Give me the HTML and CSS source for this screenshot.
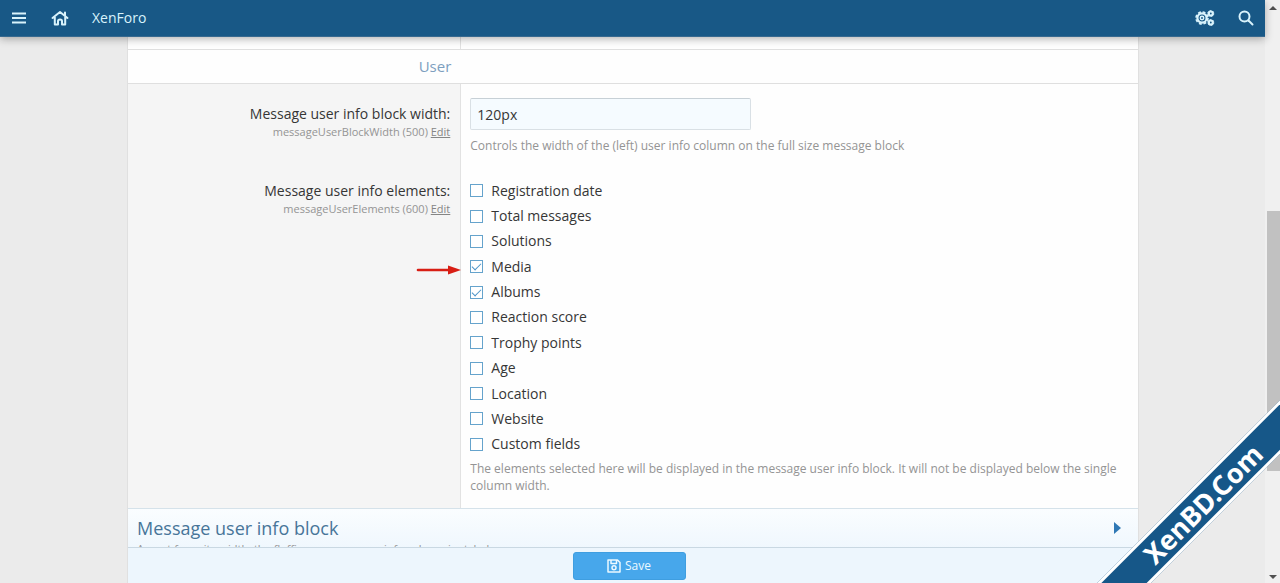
FILE: index.html
```html
<!DOCTYPE html>
<html lang="en">
<head>
<meta charset="utf-8">
<title>XenForo</title>
<link rel="stylesheet" href="styles.css">
</head>
<body>
<div class="app">
  <header class="topbar">
    <button class="icon-btn" type="button" aria-label="Menu"><svg width="14" height="14" viewBox="0 0 14 14"><path d="M0 2.500h14M0 7h14M0 11.500h14" stroke="currentColor" stroke-width="2"/></svg></button>
    <a class="icon-btn home" href="#" aria-label="Home"><svg width="18" height="16" viewBox="0 0 18 16" fill="none" stroke="currentColor" stroke-width="2" stroke-linejoin="round" stroke-linecap="round"><path d="M1.500 8 9 2l7.500 6M3.800 7V14.500H7V11Q7 9.500 9 9.500t2 1.500V14.500h3.200V7M14 2.500v3"/></svg></a>
    <a class="brand" href="#">XenForo</a>
    <button class="icon-btn gears" type="button" aria-label="Settings"><svg width="20" height="18" viewBox="0 0 20 18" fill="none" stroke="currentColor"><circle cx="7" cy="9" r="4.600" stroke-width="2.200"/><circle cx="7" cy="9" r="6" stroke-width="1.600" stroke-dasharray="2.900 1.800"/><circle cx="7" cy="9" r="1.700" stroke-width="1.500"/><circle cx="15.800" cy="4.500" r="2" stroke-width="2.200"/><circle cx="15.800" cy="4.500" r="3" stroke-width="1" stroke-dasharray="1.800 1.340"/><circle cx="15.800" cy="13.500" r="2" stroke-width="2.200"/><circle cx="15.800" cy="13.500" r="3" stroke-width="1" stroke-dasharray="1.800 1.340"/></svg></button>
    <button class="icon-btn" type="button" aria-label="Search"><svg width="16" height="16" viewBox="0 0 16 16" fill="none" stroke="currentColor" stroke-width="2" stroke-linecap="round"><circle cx="6.500" cy="6.500" r="5"/><path d="m10.500 10.500 4 4"/></svg></button>
  </header>

  <main class="content">
    <form class="block">
      <div class="row sliver"><div class="row-label"></div><div class="row-body"></div></div>
      <h2 class="section"><span>User</span></h2>

      <div class="row row-first">
        <div class="row-label">
          <label class="label" for="width">Message user info block width:</label>
          <div class="meta">messageUserBlockWidth (500) <a href="#">Edit</a></div>
        </div>
        <div class="row-body">
          <input class="text-input" id="width" type="text" value="120px">
          <p class="hint">Controls the width of the (left) user info column on the full size message block</p>
        </div>
      </div>

      <div class="row">
        <div class="row-label elements">
          <div class="label" id="elements">Message user info elements:</div>
          <div class="meta">messageUserElements (600) <a href="#">Edit</a></div>
          <svg class="arrow" width="46" height="12" viewBox="0 0 46 12"><path d="M2 6h34" stroke="#d81e14" stroke-width="2.600" stroke-linecap="round"/><path d="M32 1.500 45 6 32 10.500Z" fill="#d81e14"/></svg>
        </div>
        <div class="row-body">
          <div class="choices" role="group" aria-labelledby="elements">
            <label><input type="checkbox">Registration date</label>
            <label><input type="checkbox">Total messages</label>
            <label><input type="checkbox">Solutions</label>
            <label><input type="checkbox" checked>Media</label>
            <label><input type="checkbox" checked>Albums</label>
            <label><input type="checkbox">Reaction score</label>
            <label><input type="checkbox">Trophy points</label>
            <label><input type="checkbox">Age</label>
            <label><input type="checkbox">Location</label>
            <label><input type="checkbox">Website</label>
            <label><input type="checkbox">Custom fields</label>
          </div>
          <p class="hint">The elements selected here will be displayed in the message user info block. It will not be displayed below the single column width.</p>
        </div>
      </div>

      <button class="toggle" type="button">
        <span class="toggle-title">Message user info block</span>
        <svg class="caret" width="7" height="12" viewBox="0 0 7 12"><path d="M0 0 7 6 0 12Z" fill="#2f78b5"/></svg>
        <span class="toggle-desc">Aspect for suite width, the fluffier message user info column is styled</span>
      </button>

      <div class="submit">
        <button class="save" type="submit"><svg width="14" height="14" viewBox="0 0 14 14" fill="none" stroke="currentColor" stroke-width="1.500" stroke-linejoin="round"><path d="M1 1h9.500L13 3.500V13H1ZM4 1v3.500h5.500V1"/><circle cx="7" cy="8.800" r="2"/></svg>Save</button>
      </div>
    </form>
  </main>

  <div class="scrollbar" aria-hidden="true">
    <svg width="8" height="4" viewBox="0 0 8 4"><path d="M4 0 8 4H0Z" fill="#505050"/></svg>
    <div class="track"><div class="thumb"></div></div>
    <svg width="8" height="4" viewBox="0 0 8 4"><path d="M0 0H8L4 4Z" fill="#505050"/></svg>
  </div>
  <div class="ribbon">XenBD.Com</div>
</div>
</body>
</html>
```
FILE: styles.css
```css
* { box-sizing: border-box; }

body {
  margin: 0;
  background: #ebebeb;
  color: #363636;
  font: 14px/20px "Open Sans", "Noto Sans", sans-serif;
}

button, input { font: inherit; }
p, h2 { margin: 0; }

.app {
  position: relative;
  display: grid;
  grid-template: auto minmax(0, 1fr) / minmax(0, 1fr) 15px;
  height: 100vh;
  overflow: hidden;
}

.topbar {
  z-index: 2;
  display: flex;
  align-items: center;
  height: 37px;
  padding: 0 11px;
  background: #185886;
  color: #d9f3fc;
  border-bottom: 1px solid #37698f;
  box-shadow: 0 2px 8px rgba(0, 0, 0, .3);
}

.icon-btn {
  display: flex;
  align-items: center;
  justify-content: center;
  width: 16px;
  height: 36px;
  padding: 0;
  border: 0;
  background: none;
  color: inherit;
}
.icon-btn svg { flex: none; }
.home { margin: 0 24px 0 25px; }
.brand { color: inherit; text-decoration: none; }
.gears { width: 20px; margin: 0 23px 0 auto; }

.content {
  display: flex;
  padding: 0 126px 0 127px;
}

.block {
  position: relative;
  display: flex;
  flex-direction: column;
  flex: 1;
  min-width: 0;
  background: #fefefe;
  border: solid #e0e0e0;
  border-width: 0 1px;
}

.row {
  display: grid;
  grid-template-columns: 33% minmax(0, 1fr);
}

.row-label {
  padding: 11px 10px 0;
  background: #f5f5f5;
  border-right: 1px solid #e2e2e2;
  text-align: right;
}
.row-body { padding: 8px 9px 14px; }
.sliver .row-label, .sliver .row-body { height: 12px; padding: 0; }
.sliver .row-label { background: #fefefe; }
.row-first .row-label { padding-top: 20px; }
.row-first .row-body { padding: 14px 9px 16px; }

.section {
  border: solid #dfdfdf;
  border-width: 1px 0;
  color: #7d9fbf;
  font-size: 15px;
  font-weight: 400;
  line-height: 33px;
}
.section span {
  display: block;
  width: 33%;
  padding-right: 10px;
  text-align: right;
}

.meta {
  color: #949494;
  font-size: 11px;
  line-height: 16px;
}
.meta a { color: #858585; }

.text-input {
  display: block;
  width: 281px;
  max-width: 100%;
  height: 32px;
  padding: 0 6px;
  border: 1px solid #d9e0e5;
  border-top-color: #c7d0d6;
  border-radius: 2px;
  background: #f5fbff;
  color: #363636;
}

.hint {
  margin-top: 7px;
  color: #949494;
  font-size: 12px;
  line-height: 17px;
}

.elements { position: relative; }
.arrow {
  position: absolute;
  top: 94px;
  right: -2px;
}

.choices {
  display: grid;
  min-height: 279px;
}
.choices label {
  display: flex;
  align-items: center;
  gap: 8px;
}
.choices input {
  appearance: none;
  width: 13px;
  height: 13px;
  margin: 0;
  border: 1px solid #65a3cc;
  background: #fff;
}
.choices input:checked::after {
  content: "";
  display: block;
  width: 8px;
  height: 4px;
  margin: 2px auto 0;
  border: solid #4b94c8;
  border-width: 0 0 1px 1px;
  transform: rotate(-45deg);
}
.choices + .hint { margin-top: 3px; }

.toggle {
  display: grid;
  grid-template-columns: 1fr auto;
  align-items: center;
  padding: 6px 17px 0 9px;
  border: 0;
  border-top: 1px solid #d5e2ea;
  background: linear-gradient(#fafdff, #edf6fd);
  text-align: left;
}
.toggle-title {
  color: #477599;
  font-size: 18px;
  line-height: 26px;
}
.toggle-desc {
  color: #949494;
  font-size: 11px;
  line-height: 16px;
}

.submit {
  position: absolute;
  right: 0;
  bottom: 0;
  left: 0;
  display: flex;
  justify-content: center;
  padding: 4px 8px 3px 0;
  border-top: 1px solid #c9d8e2;
  background: #edf6fd;
}
.save {
  display: flex;
  align-items: center;
  justify-content: center;
  gap: 4px;
  width: 113px;
  height: 28px;
  padding: 0;
  border: 1px solid #3f9ee0;
  border-radius: 3px;
  background: #47a7eb;
  color: #ecf9ff;
  font-size: 12px;
}

.scrollbar {
  grid-area: 1 / 2 / 3 / 3;
  display: flex;
  flex-direction: column;
  align-items: center;
  padding: 6px 0 4px;
  background: #f0f0f0;
}
.track {
  flex: 1;
  align-self: stretch;
  padding-left: 2px;
}
.thumb {
  height: 46%;
  margin-top: 201px;
  background: #c1c1c1;
}

.ribbon {
  position: absolute;
  z-index: 3;
  right: -83px;
  bottom: 60px;
  width: 320px;
  height: 38px;
  border: solid #fff;
  border-width: 3px 0;
  background: #165788;
  color: #fff;
  font-family: "Noto Sans", sans-serif;
  font-size: 27px;
  font-weight: 700;
  line-height: 32px;
  text-align: center;
  transform: rotate(-45deg);
}
```
